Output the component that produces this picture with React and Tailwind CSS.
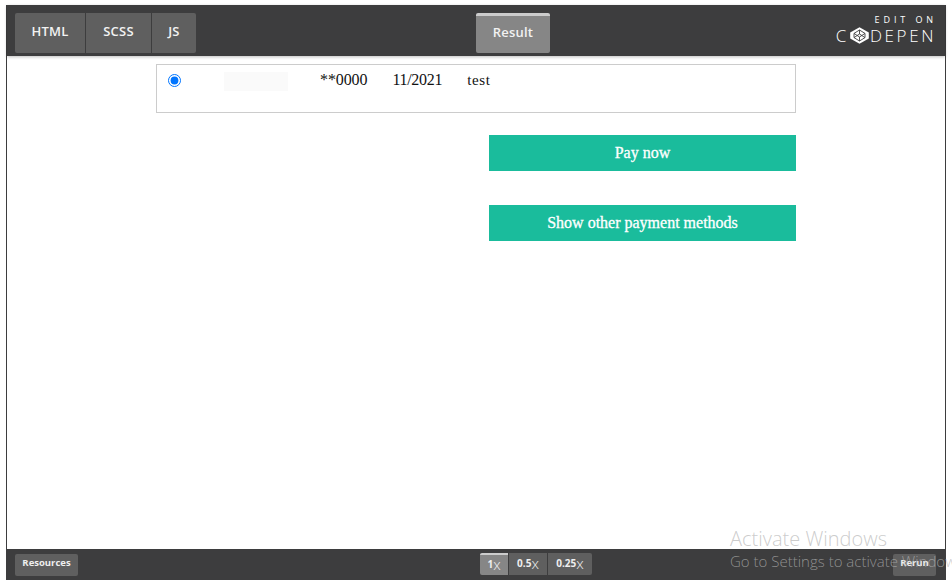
const sans = { fontFamily: '"Open Sans", sans-serif' };

const CodepenMark = () => (
    <svg width="19" height="17" viewBox="0 0 19 17" className="mx-[1px]">
        <path d="M9.5 0.2 L18.8 5.6 V11.4 L9.5 16.8 L0.2 11.4 V5.6 Z" fill="#ffffff" />
        <path d="M9.5 3 L15 6.4 V10.6 L9.5 14 L4 10.6 V6.4 Z M4 6.4 L9.5 10 L15 6.4 M9.5 10 V14 M4 10.6 L9.5 7 L15 10.6 M9.5 3 V7" fill="none" stroke="#3d3d3e" strokeWidth="0.9" />
    </svg>
);

const Tab = ({ label, className }) => (
    <div className={`flex items-center justify-center h-10 pb-[1px] bg-[#5f5f5f] text-[13px] tracking-[0.2px] font-semibold text-[#f2f2f2] ${className}`} style={sans}>
        {label}
    </div>
);

const Zoom = ({ label, className }) => (
    <div className={`flex items-center justify-center h-[22px] pb-[2px] bg-[#5f5f5f] text-[10px] font-bold text-[#eeeeee] ${className}`} style={sans}>
        {label}<span className="text-[15px] font-light leading-none">x</span>
    </div>
);

const App = () => {
    return (
        <div className="relative w-[952px] h-[588px] overflow-hidden bg-white pt-[5px] px-[6px] pb-2">
            <div className="flex flex-col h-[575px] border-x border-[#3d3d3e]">
                <header className="relative z-10 flex items-center justify-between h-[51px] shrink-0 bg-[#3d3d3e] pl-2 pr-[11px] shadow-[0_1px_3px_rgba(0,0,0,0.25)]">
                    <nav className="flex gap-px mt-[4px]">
                        <Tab label="HTML" className="w-[70px] rounded-l-[2px]" />
                        <Tab label="SCSS" className="w-[65px]" />
                        <Tab label="JS" className="w-[44px] rounded-r-[2px]" />
                    </nav>
                    <div className="absolute left-[469px] top-2 flex items-center justify-center w-[74px] h-10 pb-1 rounded-[2px] border-t-[3px] border-[#cccccc] bg-[#868686] text-[13px] tracking-[0.2px] font-semibold text-[#f2f2f2]" style={sans}>
                        Result
                    </div>
                    <div className="flex flex-col items-end text-white -mt-[1px]" style={sans}>
                        <div className="text-[9px] font-normal tracking-[3.9px] leading-[11px] mr-[-3px]">EDIT ON</div>
                        <div className="flex items-center text-[17px] font-light tracking-[2.6px] leading-[22px] mr-[-2px]">
                            C<CodepenMark />DEPEN
                        </div>
                    </div>
                </header>

                <main className="flex-1 flex justify-center pl-px pr-[1px] bg-white" style={{ fontFamily: '"Liberation Serif", serif' }}>
                    <div className="w-[640px] mt-[8px]">
                        <div className="flex h-[49px] border border-[#cccccc] pl-[11px] text-[16px] leading-5 text-[#111111]">
                            <input type="radio" defaultChecked className="w-[13px] h-[13px] mt-[9px] accent-[#0075ff]" />
                            <div className="w-16 h-[19px] ml-[43px] mt-[7px] bg-[#fafafa]" />
                            <span className="ml-8 mt-[5px] tracking-[-0.1px]">**0000</span>
                            <span className="ml-[25px] mt-[5px] tracking-[-0.3px]">11/2021</span>
                            <span className="ml-[25px] mt-[5px] tracking-[0.6px] text-[15px]">test</span>
                        </div>
                        <div className="flex flex-col items-end gap-[34px] mt-[22px]">
                            <button className="w-[307px] h-9 bg-[#1abc9c] text-[16px] text-white [-webkit-text-stroke:0.3px_white]">Pay now</button>
                            <button className="w-[307px] h-9 bg-[#1abc9c] text-[16px] text-white [-webkit-text-stroke:0.3px_white]">Show other payment methods</button>
                        </div>
                    </div>
                </main>

                <footer className="relative flex items-center justify-between h-[31px] shrink-0 bg-[#3d3d3e] pl-2 pr-[9px]">
                    <div className="flex items-center justify-center w-[63px] h-[22px] pb-[2px] rounded-[2px] bg-[#5f5f5f] text-[9.5px] font-bold text-[#eeeeee]" style={sans}>
                        Resources
                    </div>
                    <div className="absolute left-[473px] top-[4px] flex gap-px">
                        <Zoom label="1" className="w-[28px] rounded-l-[2px] border-t-2 border-[#cccccc] bg-[#868686]" />
                        <Zoom label="0.5" className="w-[38px]" />
                        <Zoom label="0.25" className="w-[44px] rounded-r-[2px]" />
                    </div>
                    <div className="flex items-center justify-center w-[43px] h-[22px] pb-[2px] rounded-[2px] bg-[#5f5f5f] text-[9.5px] font-bold text-[#eeeeee]" style={sans}>
                        Rerun
                    </div>
                </footer>
            </div>

            {/* windows watermark sits over the page */}
            <div className="absolute left-[730px] top-[527px] whitespace-nowrap text-[#b5b5b5]/70" style={sans}>
                <div className="text-[20px] leading-6 font-light">Activate Windows</div>
                <div className="text-[15px] leading-5 font-light">Go to Settings to activate Windows.</div>
            </div>
        </div>
    );
};

export default App;
